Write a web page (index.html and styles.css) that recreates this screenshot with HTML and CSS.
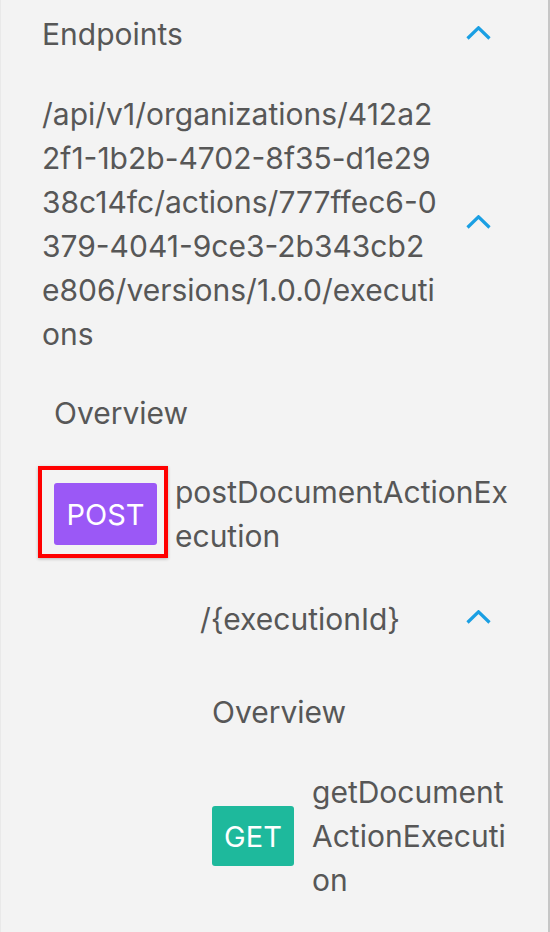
FILE: index.html
```html
<!DOCTYPE html>
<html lang="en">
<head>
<meta charset="utf-8">
<title>Endpoints</title>
<link rel="stylesheet" href="styles.css">
</head>
<body>
<nav class="sidebar">
  <div class="row head">
    <span class="label">Endpoints</span>
    <svg class="chev" viewBox="0 0 25 14" aria-hidden="true"><polyline points="1.5,12.5 12.5,1.8 23.5,12.5"/></svg>
  </div>

  <div class="row path-row">
    <span class="label wrap">/api/v1/organizations/412a22f1-1b2b-4702-8f35-d1e2938c14fc/actions/777ffec6-0379-4041-9ce3-2b343cb2e806/versions/1.0.0/executions</span>
    <svg class="chev" viewBox="0 0 25 14" aria-hidden="true"><polyline points="1.5,12.5 12.5,1.8 23.5,12.5"/></svg>
  </div>

  <div class="overview lvl1">Overview</div>

  <div class="op lvl1 op-post">
    <span class="badge-wrap">
      <span class="badge post">POST</span>
      <span class="mark"></span>
    </span>
    <span class="op-name wrap">postDocumentActionExecution</span>
  </div>

  <div class="row sub-row">
    <span class="label wrap">/{executionId}</span>
    <svg class="chev" viewBox="0 0 25 14" aria-hidden="true"><polyline points="1.5,12.5 12.5,1.8 23.5,12.5"/></svg>
  </div>

  <div class="overview lvl2">Overview</div>

  <div class="op lvl2 op-get">
    <span class="badge-wrap">
      <span class="badge get">GET</span>
    </span>
    <span class="op-name wrap">getDocumentActionExecution</span>
  </div>
</nav>
</body>
</html>
```

FILE: styles.css
```css
html, body {
  margin: 0;
  padding: 0;
}

body {
  background: #f3f3f3;
}

.sidebar {
  box-sizing: border-box;
  width: 550px;
  min-height: 932px;
  background: #f3f3f3;
  border-left: 1px solid #e9e9e9;
  border-right: 2px solid #c6c6c6;
  font-family: Inter, Roboto, sans-serif;
  font-size: 30px;
  line-height: 44px;
  color: #575757;
  display: flex;
  flex-direction: column;
  padding-bottom: 30px;
}

.wrap {
  word-break: break-all;
  overflow-wrap: anywhere;
}

.row {
  display: flex;
  align-items: center;
  padding-right: 57px;
}

.row .label {
  flex: 1;
  min-width: 0;
}

.chev {
  flex: none;
  width: 25px;
  height: 14px;
  margin-left: 25px;
  margin-bottom: 5px;
  fill: none;
  stroke: #1a9fe3;
  stroke-width: 3.2;
  stroke-linejoin: miter;
  stroke-linecap: butt;
}

.head {
  padding-top: 12px;
  padding-left: 41px;
}

.head .chev {
  margin-bottom: 3px;
}

.path-row {
  margin-top: 36px;
  padding-left: 41px;
}

.sub-row {
  margin-top: 39px;
  padding-left: 199px;
}

.overview {
  margin-top: 35px;
}

.overview.lvl1 {
  padding-left: 53px;
}

.overview.lvl2 {
  margin-top: 49px;
  padding-left: 211px;
}

.op {
  display: flex;
  align-items: center;
  margin-top: 35px;
  padding-right: 34px;
}

.op.lvl1 {
  padding-left: 53px;
}

.op.lvl2 {
  padding-left: 211px;
  margin-top: 36px;
}

.op-name {
  flex: 1;
  min-width: 0;
  margin-left: 18px;
}

.badge-wrap {
  position: relative;
  flex: none;
  display: flex;
}

.badge {
  display: flex;
  align-items: center;
  justify-content: center;
  box-sizing: border-box;
  color: #ffffff;
  border-radius: 3px;
  font-size: 29px;
  line-height: 1;
}

.badge.post {
  width: 103px;
  height: 62px;
  background: #9b58f6;
}

.badge.get {
  width: 82px;
  height: 60px;
  background: #1eb99c;
}

.mark {
  position: absolute;
  left: -16px;
  top: -17px;
  width: 130px;
  height: 92px;
  box-sizing: border-box;
  border: 4px solid #ff0000;
  box-shadow: 0 1px 3px rgba(0, 0, 0, 0.25);
}
```
